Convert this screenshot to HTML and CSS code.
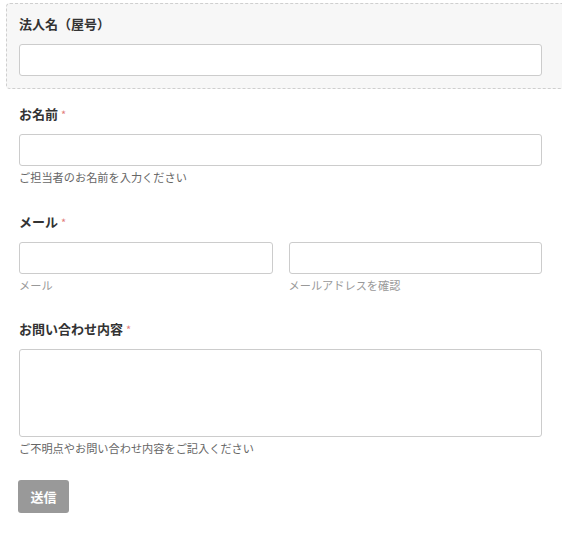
FILE: index.html
```html
<!DOCTYPE html>
<html lang="ja">
<head>
<meta charset="utf-8">
<title>お問い合わせ</title>
<link rel="stylesheet" href="styles.css">
</head>
<body>
<form class="form">
  <div class="field field--boxed">
    <label class="label" for="company">法人名（屋号）</label>
    <input class="input" id="company" type="text">
  </div>
  <div class="field">
    <label class="label" for="name">お名前 <span class="req">*</span></label>
    <input class="input" id="name" type="text">
    <div class="desc">ご担当者のお名前を入力ください</div>
  </div>
  <div class="field field--tight">
    <label class="label" for="mail">メール <span class="req">*</span></label>
    <div class="row">
      <div class="col">
        <input class="input" id="mail" type="email">
        <div class="sublabel">メール</div>
      </div>
      <div class="col">
        <input class="input" id="mail2" type="email">
        <div class="sublabel">メールアドレスを確認</div>
      </div>
    </div>
  </div>
  <div class="field field--last">
    <label class="label" for="msg">お問い合わせ内容 <span class="req">*</span></label>
    <textarea class="input textarea" id="msg"></textarea>
    <div class="desc">ご不明点やお問い合わせ内容をご記入ください</div>
  </div>
  <button class="submit" type="button">送信</button>
</form>
</body>
</html>
```
FILE: styles.css
```css
html, body {
  margin: 0;
  padding: 0;
  overflow-x: hidden;
  background: #fff;
}
body {
  font-family: "Noto Sans CJK JP", "Noto Sans", sans-serif;
  color: #333;
}
.form {
  width: 523px;
  margin-left: 19px;
  padding-top: 3px;
}
.field {
  margin-bottom: 28px;
}
.field--boxed {
  margin: 0 -40px 16px -13px;
  padding: 11px 39px 12px 12px;
  border: 1px dashed #cfcfcf;
  border-radius: 4px;
  background: #f7f7f7;
}
.field--tight {
  margin-bottom: 27px;
}
.field--last {
  margin-bottom: 24px;
}
.label {
  display: block;
  font-size: 13px;
  line-height: 18px;
  font-weight: 700;
  color: #333;
  margin-bottom: 11px;
}
.req {
  color: #e27c7c;
  font-weight: 400;
  font-size: 11px;
}
.input {
  display: block;
  box-sizing: border-box;
  width: 100%;
  height: 32px;
  margin: 0;
  border: 1px solid #ccc;
  border-radius: 3px;
  background: #fff;
  font: inherit;
}
.textarea {
  height: 88px;
  resize: none;
}
.desc {
  font-size: 11.2px;
  line-height: 16px;
  margin-top: 3px;
  color: #666;
}
.sublabel {
  font-size: 11.2px;
  line-height: 16px;
  margin-top: 3px;
  color: #999;
}
.row {
  display: grid;
  grid-template-columns: 1fr 1fr;
  column-gap: 16px;
}
.submit {
  display: block;
  margin-left: -1px;
  width: 51px;
  height: 33px;
  border: 0;
  border-radius: 3px;
  background: #999;
  color: #fff;
  font-family: inherit;
  font-size: 13px;
  font-weight: 700;
  padding: 0;
}
```
